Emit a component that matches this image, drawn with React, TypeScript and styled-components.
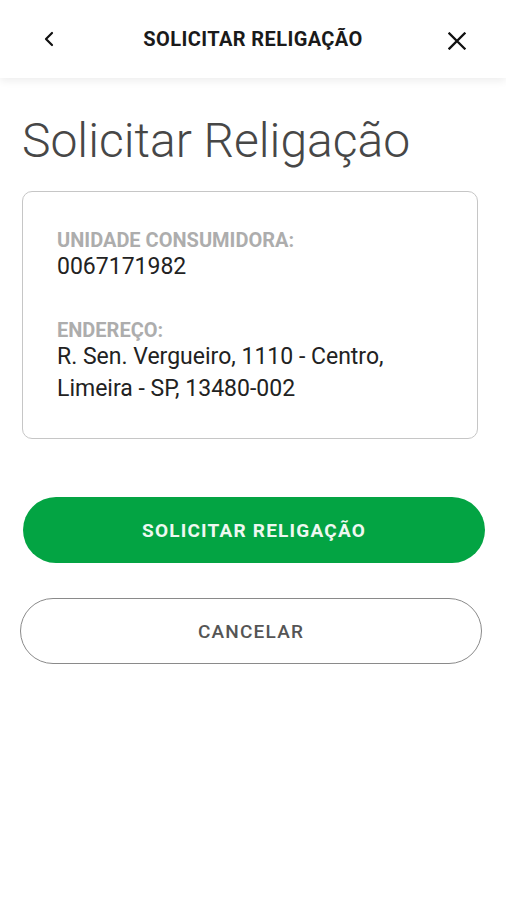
import React from "react";
import styled, { createGlobalStyle } from "styled-components";

const Global = createGlobalStyle`
  html, body { margin: 0; padding: 0; background: #ffffff; }
  body { font-family: Roboto, "Noto Sans", sans-serif; -webkit-font-smoothing: antialiased; }
`;

const Page = styled.div`
  width: 506px;
  min-height: 900px;
  background: #fff;
  display: flex;
  flex-direction: column;
`;

const Header = styled.header`
  height: 78px;
  display: grid;
  grid-template-columns: 100px 1fr 100px;
  align-items: center;
  background: #fff;
  box-shadow: 0 3px 8px rgba(0, 0, 0, 0.07);
  position: relative;
  z-index: 1;
`;

const IconBtn = styled.button<{ $align: "start" | "end" }>`
  border: none;
  background: none;
  padding: 0;
  display: flex;
  justify-content: ${(p) => (p.$align === "start" ? "flex-start" : "flex-end")};
  padding-left: ${(p) => (p.$align === "start" ? "43px" : "0")};
  padding-right: ${(p) => (p.$align === "end" ? "40px" : "0")};
  margin-top: ${(p) => (p.$align === "end" ? "3px" : "0")};
  color: #111;
`;

const HeaderTitle = styled.h1`
  margin: 0;
  text-align: center;
  font-family: Roboto, sans-serif;
  font-weight: 700;
  font-size: 20px;
  color: #1a1a1a;
  letter-spacing: 0.4px;
`;

const Content = styled.main`
  padding: 35px 28px 0 22px;
  display: flex;
  flex-direction: column;
`;

const PageTitle = styled.h2`
  margin: 0;
  font-family: Roboto, sans-serif;
  font-weight: 300;
  font-size: 48px;
  line-height: 56px;
  color: #474747;
`;

const Card = styled.section`
  margin-top: 22px;
  border: 1.5px solid #c6c6c6;
  border-radius: 10px;
  padding: 37px 30px 33px 34px;
  display: flex;
  flex-direction: column;
  gap: 36px;
`;

const Field = styled.div`
  display: flex;
  flex-direction: column;
`;

const Label = styled.span`
  font-family: Roboto, sans-serif;
  font-weight: 700;
  font-size: 20px;
  line-height: 22px;
  color: #adadad;
`;

const Value = styled.span`
  font-family: Roboto, sans-serif;
  font-weight: 400;
  font-size: 23px;
  line-height: 32px;
  color: #222;
`;

const Actions = styled.div`
  margin-top: 58px;
  display: flex;
  flex-direction: column;
  gap: 35px;
`;

const Button = styled.button<{ $variant: "primary" | "outline"; $shift: number }>`
  height: 66px;
  width: 462px;
  margin-left: ${(p) => p.$shift}px;
  border-radius: 34px;
  font-family: Roboto, sans-serif;
  font-weight: ${(p) => (p.$variant === "primary" ? 700 : 500)};
  font-size: 19px;
  letter-spacing: 1.2px;
  cursor: pointer;
  background: ${(p) => (p.$variant === "primary" ? "#03a443" : "#fff")};
  color: ${(p) => (p.$variant === "primary" ? "#eef8f1" : "#555")};
  border: ${(p) => (p.$variant === "primary" ? "none" : "1.5px solid #8a8a8a")};
`;

export default function App() {
  return (
    <Page>
      <Global />
      <Header>
        <IconBtn $align="start" aria-label="Voltar">
          <svg width="12" height="16" viewBox="0 0 12 16" fill="none">
            <path d="M9 2 L3 8 L9 14" stroke="#111" strokeWidth="2.2" strokeLinecap="round" strokeLinejoin="round" />
          </svg>
        </IconBtn>
        <HeaderTitle>SOLICITAR RELIGAÇÃO</HeaderTitle>
        <IconBtn $align="end" aria-label="Fechar">
          <svg width="18" height="18" viewBox="0 0 18 18" fill="none">
            <path d="M1.5 1.5 L16.5 16.5 M16.5 1.5 L1.5 16.5" stroke="#111" strokeWidth="2.3" strokeLinecap="square" />
          </svg>
        </IconBtn>
      </Header>
      <Content>
        <PageTitle>Solicitar Religação</PageTitle>
        <Card>
          <Field>
            <Label>UNIDADE CONSUMIDORA:</Label>
            <Value>0067171982</Value>
          </Field>
          <Field>
            <Label>ENDEREÇO:</Label>
            <Value>
              R. Sen. Vergueiro, 1110 - Centro,
              <br />
              Limeira - SP, 13480-002
            </Value>
          </Field>
        </Card>
        <Actions>
          <Button $variant="primary" $shift={1}>SOLICITAR RELIGAÇÃO</Button>
          <Button $variant="outline" $shift={-2}>CANCELAR</Button>
        </Actions>
      </Content>
    </Page>
  );
}
